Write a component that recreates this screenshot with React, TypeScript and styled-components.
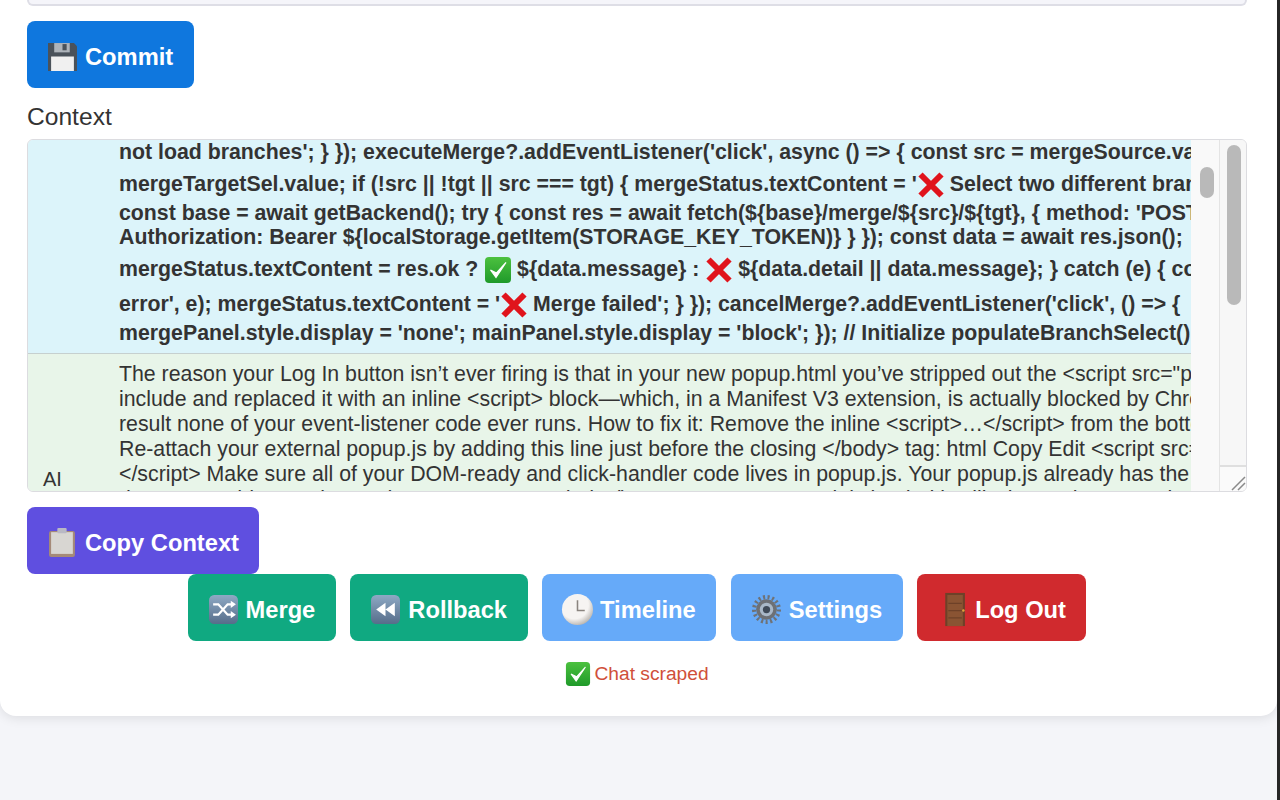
import React from "react";
import styled, { createGlobalStyle } from "styled-components";

const GlobalStyle = createGlobalStyle`
  html, body {
    margin: 0;
    height: 100%;
    overflow: hidden;
    background: #f4f5f9;
    font-family: "Liberation Sans", Arial, sans-serif;
  }
`;

const Page = styled.div`
  display: flex;
  height: 800px;
`;
const Main = styled.main`
  flex: 1;
  min-width: 0;
`;
const Edge = styled.div`
  background: #262626;
  width: 3px;
`;
const Card = styled.section`
  background: #fff;
  border-radius: 0 0 16px 16px;
  box-shadow: 0 2px 12px rgba(0, 0, 0, 0.1);
  height: 716px;
  padding: 0 30px 0 27px;
  box-sizing: border-box;
  display: flex;
  flex-direction: column;
  align-items: flex-start;
`;
const FieldEnd = styled.div`
  align-self: stretch;
  background: #f5f5fa;
  border: 2px solid #dedee6;
  border-top: 0;
  border-radius: 0 0 8px 8px;
  box-sizing: border-box;
  height: 6px;
`;
const Button = styled.button<{ $bg: string }>`
  align-items: center;
  background: ${(p) => p.$bg};
  border: 0;
  border-radius: 8px;
  color: #fff;
  display: flex;
  font-family: inherit;
  font-size: 23.7px;
  font-weight: 700;
  gap: 8px;
  height: 67px;
  padding: 0 20.5px 0 21px;
  white-space: nowrap;
`;
const ButtonText = styled.span`
  padding-top: 6px;
`;
const CommitButton = styled(Button)`
  margin-top: 15px;
`;
const CopyButton = styled(Button)`
  margin-top: 15px;
`;
const Label = styled.label`
  color: #333;
  font-size: 24.6px;
  line-height: 28px;
  margin: 15px 0 8px;
`;
const ChatBox = styled.div`
  align-self: stretch;
  background: #f8f8f8;
  border: 1px solid #dcdce0;
  border-radius: 6px;
  display: flex;
  height: 353px;
  box-sizing: border-box;
  overflow: hidden;
`;
const Transcript = styled.div`
  flex: 1;
  min-width: 0;
  overflow: hidden;
`;
const Row = styled.div<{ $bg: string }>`
  background: ${(p) => p.$bg};
  display: flex;
  overflow: hidden;
`;
const AiRow = styled(Row)`
  border-top: 1px solid #c6d0cf;
  height: 139px;
  box-sizing: border-box;
`;
const Role = styled.div`
  align-self: flex-end;
  box-sizing: border-box;
  color: #333;
  flex: 0 0 91px;
  font-size: 20px;
  line-height: 24px;
  padding: 0 0 1px 15px;
`;
const Message = styled.div<{ $bold?: boolean }>`
  color: #333;
  flex: 1;
  font-size: 21.3px;
  font-weight: ${(p) => (p.$bold ? 700 : 400)};
  min-width: 0;
  overflow: hidden;
  padding-bottom: ${(p) => (p.$bold ? 8 : 0)}px;
  padding-top: ${(p) => (p.$bold ? 0 : 7.5)}px;
`;
const Line = styled.div<{ $gap?: number }>`
  line-height: 24px;
  margin-top: ${(p) => p.$gap ?? 0}px;
  white-space: nowrap;
  height: 24px;
`;
const AiLine = styled(Line)`
  line-height: 25px;
  height: 25px;
`;
const ScrollTrack = styled.div`
  background: #f9f9f9;
  box-sizing: border-box;
  flex: 0 0 28px;
  padding: 27px 5px 0 9px;
`;
const ScrollThumb = styled.div<{ $h: number }>`
  background: #b9b9b9;
  border-radius: 7px;
  height: ${(p) => p.$h}px;
`;
const OuterTrack = styled.div`
  background: #f7f7f7;
  border-left: 1px solid #e4e4e4;
  box-sizing: border-box;
  display: flex;
  flex: 0 0 27px;
  flex-direction: column;
  justify-content: space-between;
  padding-top: 5px;
`;
const OuterThumb = styled(ScrollThumb)`
  margin: 0 5px 0 7px;
`;
const Resizer = styled.div`
  background: #fafafa;
  border-top: 2px solid #dfdfdf;
  box-sizing: border-box;
  height: 26px;
  display: flex;
  align-items: flex-end;
  justify-content: flex-end;
`;
const ActionRow = styled.div`
  align-self: stretch;
  display: flex;
  gap: 14.5px;
  justify-content: center;
`;
const Status = styled.div`
  align-items: center;
  align-self: center;
  color: #d04f3a;
  display: flex;
  font-size: 19.2px;
  gap: 4px;
  height: 26px;
  margin-top: 20px;
  svg {
    height: 26px;
    width: 26px;
  }
`;
const InlineIcon = styled.svg`
  display: inline-block;
  height: 28px;
  margin: -6px -1px -6px 0;
  vertical-align: middle;
  width: 28px;
`;
const ButtonIcon = styled.svg`
  flex: 0 0 29px;
  height: 29px;
  margin-top: 3px;
  overflow: visible;
  width: 29px;
`;

const Check: React.FC = () => (
  <InlineIcon viewBox="0 0 28 28">
    <defs>
      <linearGradient id="checkFill" x1="0" y1="0" x2="0" y2="1">
        <stop offset="0" stopColor="#4cc13f" />
        <stop offset="1" stopColor="#1f9a2a" />
      </linearGradient>
    </defs>
    <rect x="1" y="1" width="26" height="26" rx="4" fill="url(#checkFill)" />
    <path d="M6.500 14l5.500 7.500L22 6.500l-9.500 10.500z" fill="#fff" stroke="#fff" strokeWidth="1.200" />
  </InlineIcon>
);
const Cross: React.FC = () => (
  <InlineIcon viewBox="0 0 28 28">
    <path d="M3.500 3.500L24.500 24.500M24.500 3.500L3.500 24.500" stroke="#e0141c" strokeWidth="6" />
  </InlineIcon>
);
const Floppy: React.FC = () => (
  <ButtonIcon viewBox="0 0 28 28">
    <path d="M0 1h25l3 3v24H0z" fill="#4a525a" />
    <rect x="6" y="1" width="15" height="9" fill="#aeb4ba" />
    <rect x="14" y="2" width="4" height="6" fill="#4a525a" />
    <rect x="3" y="14" width="22" height="14" fill="#f0f0f0" />
  </ButtonIcon>
);
const Clipboard: React.FC = () => (
  <ButtonIcon viewBox="0 0 28 28">
    <rect x="1" y="3" width="25" height="25" rx="2" fill="#a58a78" />
    <rect x="3" y="4" width="21" height="21" fill="#d8d6d2" />
    <rect x="9" y="0" width="9" height="5" rx="1" fill="#b9b9c4" />
  </ButtonIcon>
);
const Tile: React.FC<{ children: React.ReactNode }> = ({ children }) => (
  <ButtonIcon viewBox="0 0 28 28">
    <defs>
      <linearGradient id="tile" x1="0" y1="0" x2="0" y2="1">
        <stop offset="0" stopColor="#8ea9c4" />
        <stop offset="1" stopColor="#566d8a" />
      </linearGradient>
    </defs>
    <rect width="28" height="28" rx="5" fill="url(#tile)" />
    {children}
  </ButtonIcon>
);
const Shuffle: React.FC = () => (
  <Tile>
    <path
      d="M4 9h5l9 10h4M4 19h5l9-10h4"
      fill="none"
      stroke="#fff"
      strokeWidth="2.200"
    />
    <path d="M21 5.500l5 3.500-5 3.500zM21 15.500l5 3.500-5 3.500z" fill="#fff" />
  </Tile>
);
const Rewind: React.FC = () => (
  <Tile>
    <path d="M5 14l9-6.500v13zM14 14l9-6.500v13z" fill="#fff" />
  </Tile>
);
const Clock: React.FC = () => (
  <ButtonIcon viewBox="0 0 28 28">
    <defs>
      <radialGradient id="clockFace" cx="0.4" cy="0.35" r="0.75">
        <stop offset="0.6" stopColor="#f6f4f2" />
        <stop offset="1" stopColor="#a8a29c" />
      </radialGradient>
    </defs>
    <circle cx="14" cy="14" r="15" fill="url(#clockFace)" />
    <path d="M14 5v10h7" fill="none" stroke="#8a847f" strokeWidth="1.500" />
  </ButtonIcon>
);
const Gear: React.FC = () => (
  <ButtonIcon viewBox="0 0 28 28">
    <circle
      cx="14"
      cy="14"
      r="12"
      fill="none"
      stroke="#6f7276"
      strokeWidth="4"
      strokeDasharray="2 2.400"
    />
    <circle cx="14" cy="14" r="10" fill="#6d7075" />
    <circle cx="14" cy="14" r="6.500" fill="#a9b8c8" />
    <circle cx="14" cy="14" r="3.500" fill="#3f4a58" />
  </ButtonIcon>
);
const Door: React.FC = () => (
  <ButtonIcon viewBox="0 0 28 28">
    <rect x="7" y="-2" width="19" height="32" fill="#6e4128" />
    <rect x="9" y="0" width="15" height="30" fill="#8a5433" />
    <path d="M10 8h13M10 15h13M10 22h13" stroke="#6e4128" strokeWidth="1.200" />
    <circle cx="24.500" cy="15" r="1.200" fill="#e2a33c" />
  </ButtonIcon>
);

const actions = [
  { label: "Merge", bg: "#10a981", icon: <Shuffle /> },
  { label: "Rollback", bg: "#10a981", icon: <Rewind /> },
  { label: "Timeline", bg: "#66aaf9", icon: <Clock /> },
  { label: "Settings", bg: "#66aaf9", icon: <Gear /> },
  { label: "Log Out", bg: "#d02a2e", icon: <Door /> },
];

const App: React.FC = () => (
  <Page>
    <GlobalStyle />
    <Main>
      <Card>
        <FieldEnd />
        <CommitButton $bg="#0f77de">
          <Floppy />
          <ButtonText>Commit</ButtonText>
        </CommitButton>
        <Label>Context</Label>
        <ChatBox>
          <Transcript>
            <Row $bg="#dcf4fa">
              <Role />
              <Message $bold>
                <Line>
                  not load branches'; {"}"} {"}"}); executeMerge?.addEventListener('click', async () =&gt; {"{"} const src = mergeSource.value; const tgt =
                </Line>
                <Line $gap={8}>
                  mergeTargetSel.value; if (!src || !tgt || src === tgt) {"{"} mergeStatus.textContent = '<Cross /> Select two different branches'; return; {"}"}
                </Line>
                <Line $gap={5}>
                  const base = await getBackend(); try {"{"} const res = await fetch(${"{"}base{"}"}/merge/${"{"}src{"}"}/${"{"}tgt{"}"}, {"{"} method: 'POST', headers: {"{"}
                </Line>
                <Line>
                  Authorization: Bearer ${"{"}localStorage.getItem(STORAGE_KEY_TOKEN){"}"} {"}"} {"}"}); const data = await res.json();
                </Line>
                <Line $gap={8}>
                  mergeStatus.textContent = res.ok ? <Check /> ${"{"}data.message{"}"} : <Cross /> ${"{"}data.detail || data.message{"}"}; {"}"} catch (e) {"{"} console.error('Merge
                </Line>
                <Line $gap={11}>
                  error', e); mergeStatus.textContent = '<Cross /> Merge failed'; {"}"} {"}"}); cancelMerge?.addEventListener('click', () =&gt; {"{"}
                </Line>
                <Line $gap={5}>
                  mergePanel.style.display = 'none'; mainPanel.style.display = 'block'; {"}"}); // Initialize populateBranchSelect();
                </Line>
              </Message>
            </Row>
            <AiRow $bg="#e8f5e9">
              <Role>AI</Role>
              <Message>
                <AiLine>
                  The reason your Log In button isn’t ever firing is that in your new popup.html you’ve stripped out the &lt;script src="popup.js"&gt;
                </AiLine>
                <AiLine>
                  include and replaced it with an inline &lt;script&gt; block—which, in a Manifest V3 extension, is actually blocked by Chrome's CSP. As a
                </AiLine>
                <AiLine>
                  result none of your event-listener code ever runs. How to fix it: Remove the inline &lt;script&gt;…&lt;/script&gt; from the bottom of popup.html.
                </AiLine>
                <AiLine>
                  Re-attach your external popup.js by adding this line just before the closing &lt;/body&gt; tag: html Copy Edit &lt;script src="popup.js"&gt;
                </AiLine>
                <AiLine>
                  &lt;/script&gt; Make sure all of your DOM-ready and click-handler code lives in popup.js. Your popup.js already has the
                </AiLine>
                <AiLine>
                  document.addEventListener("DOMContentLoaded", () =&gt; wrapper, so once it is loaded it will wire up the Log In button
                </AiLine>
              </Message>
            </AiRow>
          </Transcript>
          <ScrollTrack>
            <ScrollThumb $h={31} />
          </ScrollTrack>
          <OuterTrack>
            <OuterThumb $h={160} />
            <Resizer>
              <svg width="16" height="16" viewBox="0 0 16 16">
                <path d="M2 15L15 2M8 15l7-7" stroke="#8a8a8a" strokeWidth="1.500" />
              </svg>
            </Resizer>
          </OuterTrack>
        </ChatBox>
        <CopyButton $bg="#5f4fe0">
          <Clipboard />
          <ButtonText>Copy Context</ButtonText>
        </CopyButton>
        <ActionRow>
          {actions.map((a) => (
            <Button key={a.label} $bg={a.bg}>
              {a.icon}
              <ButtonText>{a.label}</ButtonText>
            </Button>
          ))}
        </ActionRow>
        <Status>
          <Check />
          Chat scraped
        </Status>
      </Card>
    </Main>
    <Edge />
  </Page>
);

export default App;
